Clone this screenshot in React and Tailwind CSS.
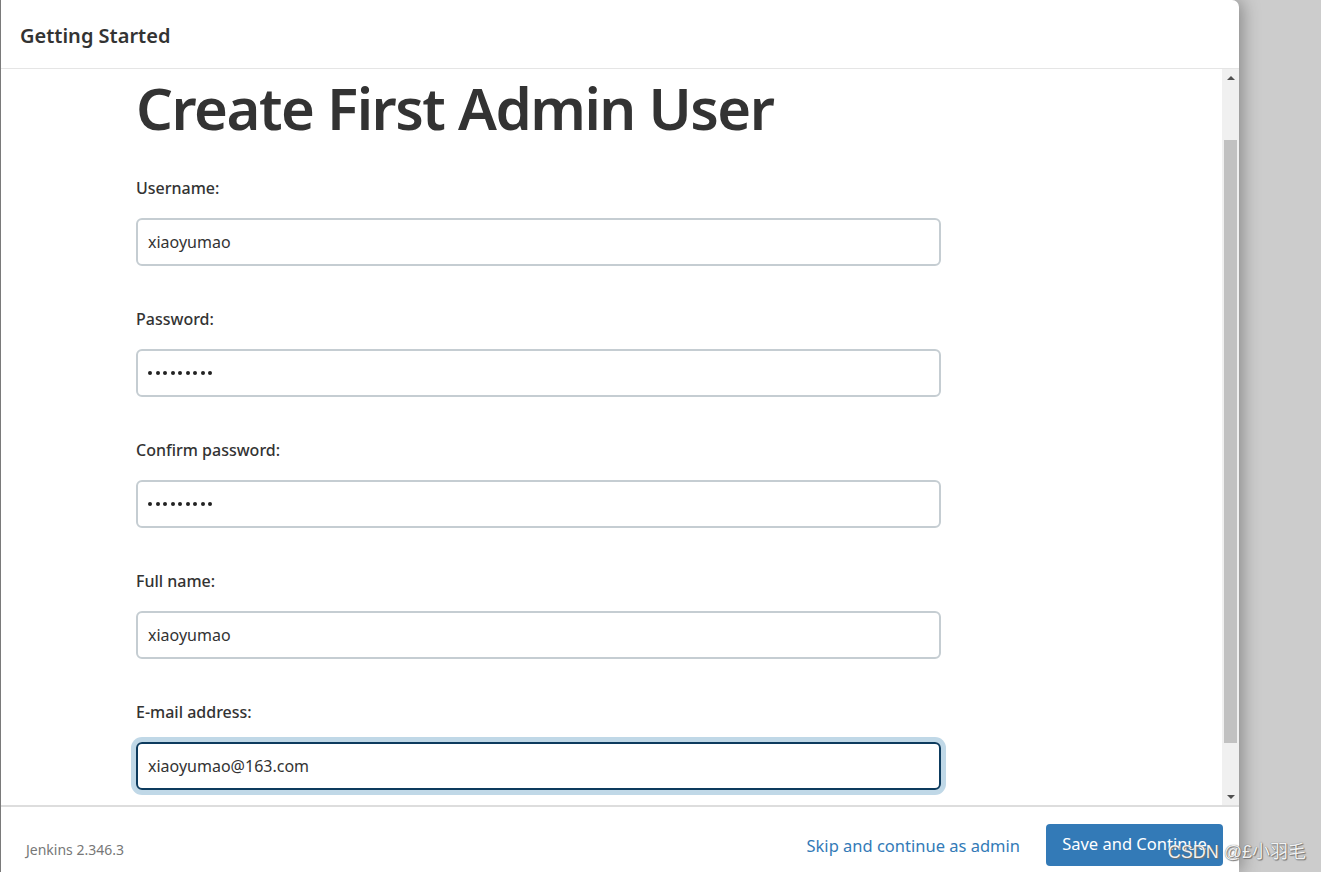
import React from 'react';

const fields = [
  { label: 'Username:', value: 'xiaoyumao' },
  { label: 'Password:', value: '', password: true },
  { label: 'Confirm password:', value: '', password: true },
  { label: 'Full name:', value: 'xiaoyumao' },
  { label: 'E-mail address:', value: 'xiaoyumao@163.com', focused: true },
];

function Dots() {
  return (
    <div className="flex gap-[3.5px]">
      {Array.from({ length: 9 }).map((_, i) => (
        <span key={i} className="w-[4px] h-[4px] rounded-full bg-[#222]" />
      ))}
    </div>
  );
}

function Field({ label, value, password, focused }) {
  return (
    <div className="mb-[41px]">
      <div className="h-[42px] text-[16px] leading-[24px] font-medium text-[#333]">{label}</div>
      <div
        className={
          'w-[805px] h-[48px] rounded-[6px] border-2 flex items-center px-[10px] text-[16px] text-[#333] ' +
          (focused
            ? 'border-[#0d3b5e] shadow-[0_0_0_5px_#c0d8e7]'
            : 'border-[#c5cdd2]')
        }
      >
        {password ? <Dots /> : value}
      </div>
    </div>
  );
}

export default function App() {
  return (
    <div className="relative w-full h-[872px] bg-[#cccccc] overflow-hidden flex" style={{ fontFamily: '"Noto Sans", "Open Sans", sans-serif' }}>
      <div className="w-[1239px] h-full bg-white flex flex-col rounded-tr-[7px] border-l border-[#7a7a7a] shadow-[3px_0_18px_rgba(0,0,0,0.35)]">
        <div className="h-[69px] shrink-0 border-b border-[#e5e5e5] flex items-center px-[19px] pt-[4px]">
          <h4 className="text-[20px] font-semibold text-[#333]">Getting Started</h4>
        </div>

        <div className="flex-1 flex min-h-0">
          <div className="flex-1 overflow-hidden pl-[135px] pt-[3px]">
            <h1 className="text-[58px] leading-[72px] font-semibold tracking-[-1.5px] text-[#333] mb-[32px]">Create First Admin User</h1>
            {fields.map((f) => (
              <Field key={f.label} {...f} />
            ))}
          </div>
          <div className="w-[17px] shrink-0 bg-[#f0f0f0] flex flex-col items-center">
            <div className="h-[17px] flex items-center justify-center">
              <div className="w-0 h-0 border-l-[4px] border-r-[4px] border-b-[4px] border-l-transparent border-r-transparent border-b-[#505050]" />
            </div>
            <div className="mt-[54px] w-[13px] h-[603px] bg-[#c1c1c1]" />
            <div className="flex-1" />
            <div className="h-[17px] flex items-center justify-center">
              <div className="w-0 h-0 border-l-[4px] border-r-[4px] border-t-[4px] border-l-transparent border-r-transparent border-t-[#505050]" />
            </div>
          </div>
        </div>

        <div className="h-[67px] shrink-0 border-t-2 border-[#dddddd] flex items-center pl-[25px] pr-[16px] pt-[14px] pb-[4px]">
          <span className="text-[14px] text-[#777] mt-[10px]">Jenkins 2.346.3</span>
          <div className="flex-1" />
          <a className="text-[16.5px] text-[#337ab7] mr-[26px] mt-[4px]">Skip and continue as admin</a>
          <button className="h-[42px] w-[177px] rounded-[4px] bg-[#337ab7] text-white text-[16.5px]">Save and Continue</button>
        </div>
      </div>

      <div className="absolute right-[15px] bottom-[6px] text-[18px] text-[#f2f2f2] [text-shadow:0_0_1px_#555,1px_1px_1px_#777]" style={{ fontFamily: '"Liberation Sans", "Noto Sans CJK SC", sans-serif' }}>
        CSDN @£小羽毛
      </div>
    </div>
  );
}
